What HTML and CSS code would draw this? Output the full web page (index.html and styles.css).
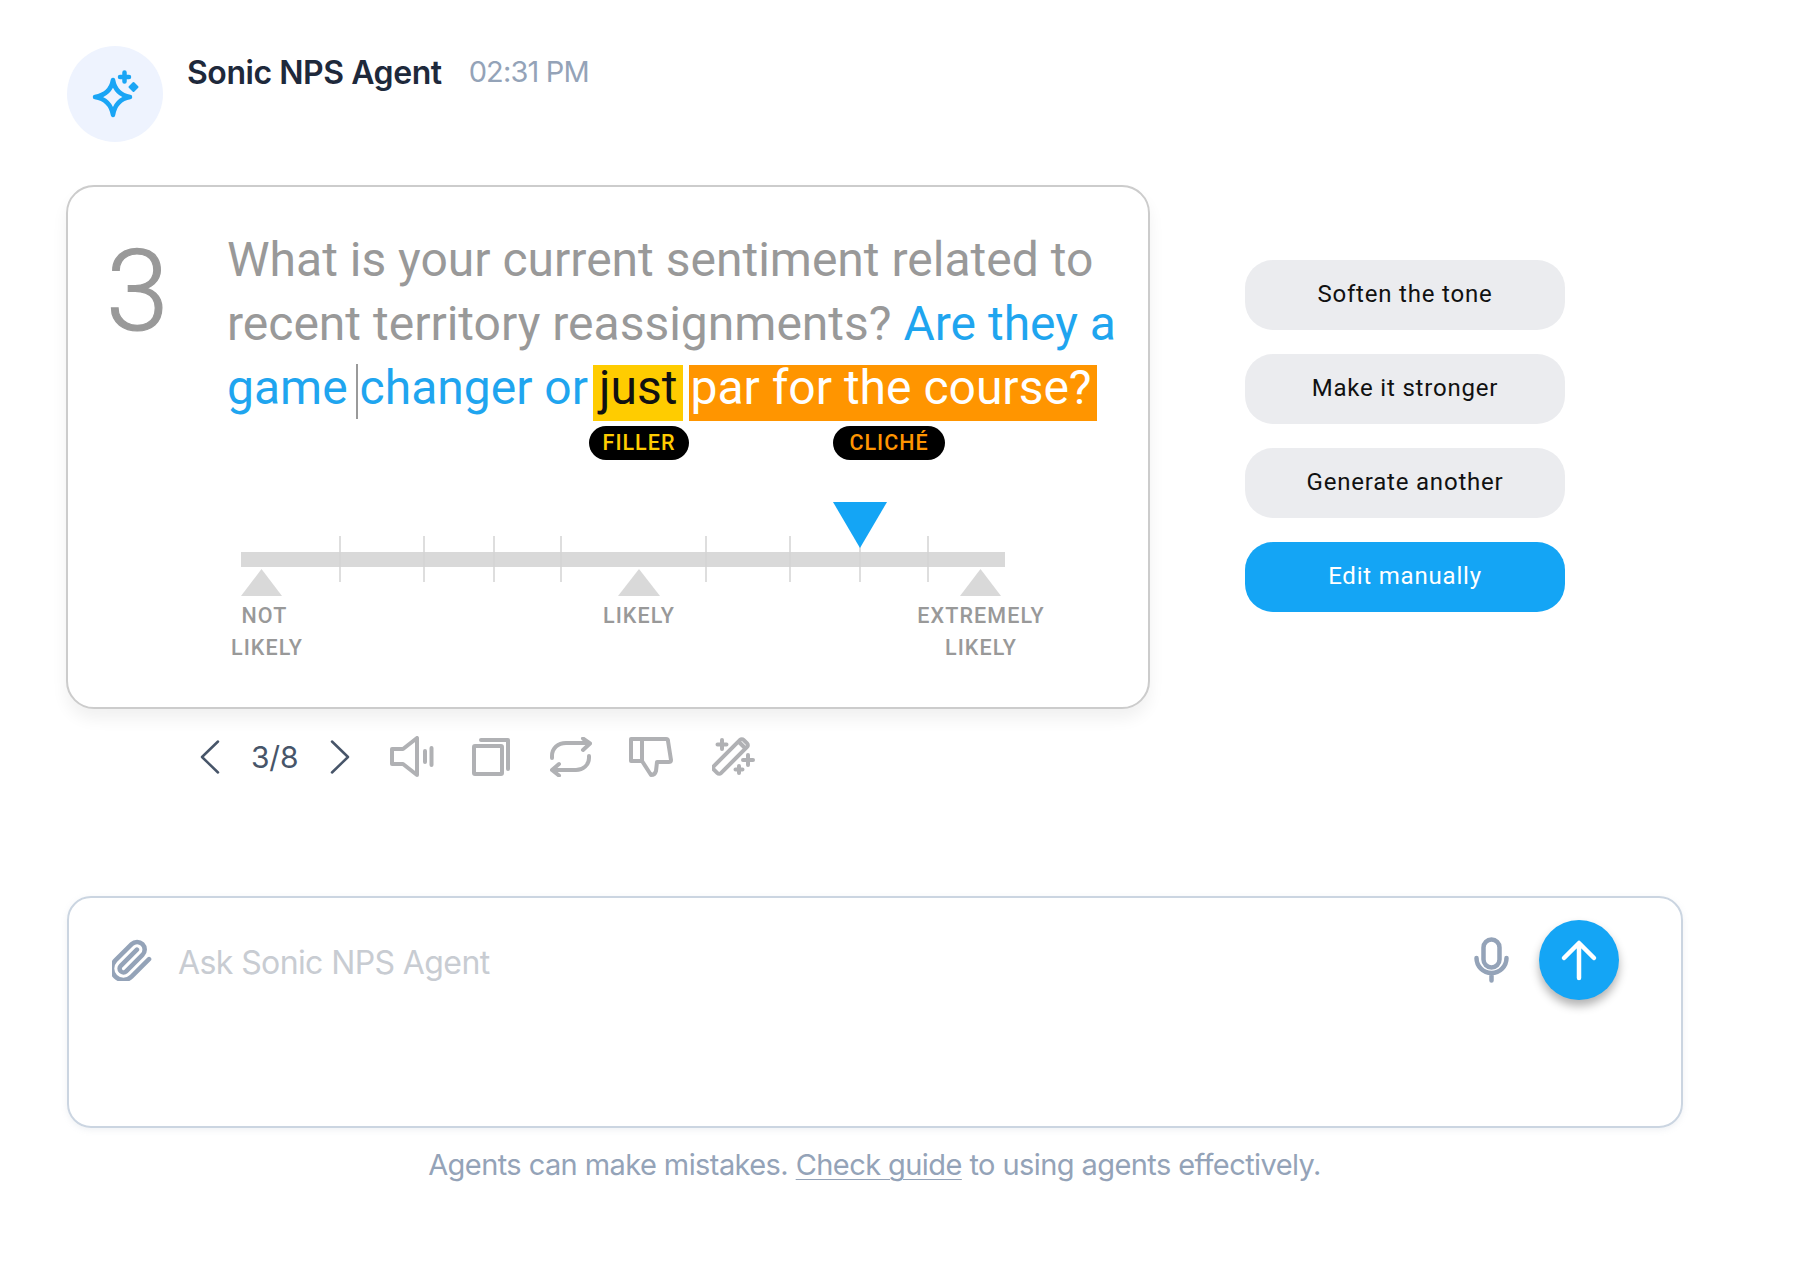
FILE: index.html
```html
<!DOCTYPE html>
<html lang="en">
<head>
  <meta charset="UTF-8" />
  <title>Sonic NPS Agent</title>
  <link rel="stylesheet" href="styles.css">
</head>
<body>
  <div class="page">
    <div class="agent-head">
      <div class="avatar">
        <svg width="96" height="96" viewBox="0 0 96 96" fill="none" stroke="#1aa5f5" stroke-width="4.500" stroke-linecap="round" stroke-linejoin="round">
          <path d="M46 34 Q48.500 48.500 63 51 Q48.500 53.500 46 69 Q43.500 53.500 28 51 Q43.500 48.500 46 34 Z"/>
          <path d="M57.500 26.500 V35.500 M53 31 H62"/>
          <path d="M66.500 37 L70.500 41 L66.500 45 L62.500 41 Z" fill="#1aa5f5" stroke-width="2"/>
        </svg>
      </div>
      <div class="agent-name">Sonic NPS Agent</div>
      <div class="agent-time">02:31 PM</div>
    </div>

    <div class="answer-row">
      <div class="answer-col">
        <div class="card">
          <div class="question">
            <div class="question-num">3</div>
            <div class="question-text">What is your current sentiment related to recent territory reassignments? <span class="blue">Are they a game<span class="caret"></span>changer or</span><span class="hl-filler">just</span><span class="hl-cliche">par for the course?</span></div>
          </div>
          <div class="tags">
            <span class="tag tag-filler">FILLER</span>
            <span class="tag tag-cliche">CLICHÉ</span>
          </div>
          <svg class="scale" width="790" height="98" viewBox="0 0 790 98">
            <g fill="#d9d9d9">
              <rect x="14" y="52" width="764" height="15"/>
              <path d="M14 96 L34.500 69 L55 96 Z"/>
              <path d="M391 96 L412 69 L433 96 Z"/>
              <path d="M733 96 L753.500 69 L774 96 Z"/>
            </g>
            <path d="M113 36V82 M197 36V82 M267 36V82 M334 36V82 M479 36V82 M563 36V82 M633 36V82 M701 36V82" stroke="#d4d4d4" stroke-width="1.500"/>
            <path d="M606 2 H660 L633 48 Z" fill="#14a5f5"/>
          </svg>
          <div class="scale-labels">
            <div class="scale-label"><span class="label-top">NOT</span><br>LIKELY</div>
            <div class="scale-label">LIKELY</div>
            <div class="scale-label">EXTREMELY<br>LIKELY</div>
          </div>
        </div>

        <div class="toolbar">
          <svg class="chev" width="20" height="34" viewBox="0 0 20 34"><path d="M18 1.500 L2 17 L18 32.500"/></svg>
          <span class="pager">3/8</span>
          <svg class="chev chev-next" width="20" height="34" viewBox="0 0 20 34"><path d="M2 1.500 L18 17 L2 32.500"/></svg>
          <svg class="tool tool-sound" width="44" height="42" viewBox="0 0 44 42"><path d="M2 13 H13 L27 2 V39 L13 28 H2 Z"/><path d="M35 15 V26 M41.500 12 V29"/></svg>
          <svg class="tool tool-copy" width="38" height="38" viewBox="0 0 38 38"><rect x="2" y="8" width="28" height="28" rx="1"/><path d="M9 2 H36 V31"/></svg>
          <svg class="tool tool-repeat" width="42" height="40" viewBox="0 0 42 40"><path d="M2 21 V19 C2 11 8 6 16 6 H39 M33 1.500 L40 6.500 L33 13"/><path d="M39 19 V21 C39 28 33 33 26 33 H3 M9 27 L2 33 L9 38.500"/></svg>
          <svg class="tool tool-thumb" width="44" height="40" viewBox="0 0 44 40"><path d="M2 2 H37 Q39 2 39 4 L42 23 Q42 25 40 25 H28 L27 34 Q26 38 22 38 L13 24 H2 Z"/><path d="M13 2 V24"/></svg>
          <svg class="tool tool-wand" width="44" height="40" viewBox="0 0 44 40">
            <rect x="-21" y="-5" width="42" height="10" rx="2.500" transform="translate(18.500 19.500) rotate(-45)"/>
            <path d="M27 5 L33 11"/>
            <path d="M10 3 V12 M5.500 7.500 H14.500 M36 18 V28 M31 23 H41 M27 29 V36 M23.500 32.500 H30.500"/>
          </svg>
        </div>
      </div>

      <div class="actions">
        <div class="action">Soften the tone</div>
        <div class="action">Make it stronger</div>
        <div class="action">Generate another</div>
        <div class="action action-primary">Edit manually</div>
      </div>
    </div>

    <div class="composer">
      <div class="composer-row">
        <svg class="clip" width="40" height="42" viewBox="2 1 21 21" fill="none" stroke="#94a3b8" stroke-width="2.400" stroke-linecap="round" stroke-linejoin="round"><path d="m21.440 11.050-9.190 9.190a6 6 0 0 1-8.490-8.490l8.570-8.570A4 4 0 1 1 18 8.840l-8.590 8.570a2 2 0 0 1-2.830-2.830l8.490-8.480"/></svg>
        <div class="composer-text">Ask Sonic NPS Agent</div>
        <svg class="mic" width="36" height="46" viewBox="0 0 36 46" fill="none" stroke="#94a3b8" stroke-width="4.500" stroke-linecap="round"><rect x="9.500" y="2.500" width="16" height="28" rx="8"/><path d="M2.500 21 a15 15 0 0 0 30 0 M17.500 36 V43.500"/></svg>
        <div class="send">
          <svg width="80" height="80" viewBox="0 0 80 80" fill="none" stroke="#fff" stroke-width="4.500" stroke-linecap="round" stroke-linejoin="round"><path d="M40 24 V58 M25 38 L40 23 L55 38"/></svg>
        </div>
      </div>
    </div>

    <div class="disclaimer">Agents can make mistakes. <a href="#" class="guide-link">Check guide</a> to using agents effectively.</div>
  </div>
</body>
</html>
```

FILE: styles.css
```css
body {
  margin: 0;
  background: #fff;
  font-family: 'Inter', 'Liberation Sans', sans-serif;
}

.page {
  width: 1617px;
  padding: 46px 0 0 66px;
}

/* header */
.agent-head {
  display: flex;
  align-items: flex-start;
  padding-left: 1px;
}

.avatar {
  width: 96px;
  height: 96px;
  border-radius: 50%;
  background: #eef3fe;
  flex-shrink: 0;
}

.agent-name {
  margin: 7px 0 0 24px;
  font-size: 32px;
  line-height: 40px;
  font-weight: 600;
  letter-spacing: -0.45px;
  color: #1e293b;
}

.agent-time {
  margin: 6px 0 0 27px;
  font-size: 29px;
  line-height: 40px;
  letter-spacing: -0.85px;
  color: #94a3b8;
}

/* question card */
.answer-row {
  display: flex;
  margin-top: 43px;
}

.answer-col {
  width: 1084px;
}

.card {
  box-sizing: border-box;
  height: 524px;
  border: 2px solid #cccccc;
  border-radius: 28px;
  background: #fff;
  box-shadow: 0 10px 16px rgba(0, 0, 0, 0.06);
  padding-top: 41px;
  font-family: 'Roboto', 'Liberation Sans', sans-serif;
}

.question {
  display: flex;
}

.question-num {
  width: 159px;
  padding: 8px 0 0 38px;
  box-sizing: border-box;
  font-size: 113px;
  font-weight: 300;
  -webkit-text-stroke: 1.2px #999;
  line-height: 112px;
  color: #999;
  flex-shrink: 0;
}

.question-text {
  width: 900px;
  font-size: 48px;
  line-height: 64px;
  color: #999;
}

.blue {
  color: #1fa5ef;
}

.caret {
  display: inline-block;
  width: 2px;
  height: 55px;
  margin: 0 2px 0 8px;
  background: #9a9a9a;
  vertical-align: -15px;
}

/* the colour band sits a little lower than the text box */
.hl-filler {
  margin-left: 5px;
  padding: 0 6px 5px;
  background: linear-gradient(#ffcc00, #ffcc00) 0 100% / 100% 56px no-repeat;
  color: #111;
}

.hl-cliche {
  margin-left: 6px;
  padding: 0 5px 5px 1px;
  background: linear-gradient(#ff9500, #ff9500) 0 100% / 100% 56px no-repeat;
  color: #fff;
}

.tags {
  display: flex;
  gap: 144px;
  margin: 6px 0 0 521px;
}

.tag {
  height: 34px;
  line-height: 34px;
  border-radius: 17px;
  background: #000;
  font-size: 21.5px;
  font-weight: 500;
  letter-spacing: 1px;
  text-align: center;
}

.tag-filler {
  width: 100px;
  color: #ffcc00;
}

.tag-cliche {
  width: 112px;
  color: #ff9500;
}

.scale {
  display: block;
  margin: 40px 0 0 159px;
}

.scale-labels {
  display: flex;
  margin: 2px 0 0 134px;
}

.scale-label {
  width: 130px;
  font-size: 21.5px;
  font-weight: 500;
  line-height: 32px;
  letter-spacing: 1.1px;
  text-align: center;
  color: #999;
}

.scale-label + .scale-label {
  margin-left: 242px;
}

.scale-label + .scale-label + .scale-label {
  margin-left: 212px;
}

.label-top {
  margin-right: 5px;
}

/* toolbar under the card */
.toolbar {
  display: flex;
  align-items: center;
  height: 40px;
  margin: 28px 0 0 134px;
}

.chev {
  fill: none;
  stroke: #475569;
  stroke-width: 2.500;
  stroke-linecap: round;
  stroke-linejoin: round;
}

.chev-next {
  margin-left: 32px;
}

.pager {
  margin-left: 31px;
  font-size: 30px;
  letter-spacing: -0.2px;
  color: #475569;
}

.tool {
  fill: none;
  stroke: #b0b1b4;
  stroke-width: 4;
  stroke-linecap: round;
  stroke-linejoin: round;
}

.tool-sound {
  margin-left: 40px;
}

.tool-copy {
  margin-left: 38px;
}

.tool-repeat {
  margin-left: 40px;
}

.tool-thumb {
  margin-left: 37px;
}

.tool-wand {
  margin-left: 39px;
}

/* suggested actions */
.actions {
  display: flex;
  flex-direction: column;
  gap: 24px;
  width: 320px;
  margin: 75px 0 0 95px;
}

.action {
  height: 70px;
  line-height: 68px;
  border-radius: 28px;
  background: #ebecef;
  text-align: center;
  font-family: 'Roboto', 'Liberation Sans', sans-serif;
  font-size: 24px;
  letter-spacing: 0.8px;
  color: #111;
}

.action-primary {
  background: #14a5f5;
  color: #fff;
}

/* composer */
.composer {
  box-sizing: border-box;
  width: 1616px;
  height: 232px;
  margin: 119px 0 0 1px;
  padding: 22px 62px 0 43px;
  border: 2px solid #cbd5e1;
  border-radius: 24px;
  box-shadow: 0 2px 6px rgba(148, 163, 184, 0.15);
}

.composer-row {
  display: flex;
  align-items: center;
  height: 80px;
}

.composer-text {
  flex: 1;
  margin-left: 26px;
  padding-top: 4px;
  font-size: 32px;
  letter-spacing: -0.6px;
  color: #c8ccd2;
}

.mic {
  margin-left: 1px;
}

.send {
  width: 80px;
  height: 80px;
  margin-left: 29px;
  border-radius: 50%;
  background: #14a5f5;
  box-shadow: 0 6px 10px rgba(0, 0, 0, 0.3);
}

.send svg {
  display: block;
}

.disclaimer {
  width: 1617px;
  margin-top: 19px;
  text-align: center;
  font-size: 29px;
  line-height: 36px;
  letter-spacing: -0.58px;
  color: #94a3b8;
}

.guide-link {
  color: #94a3b8;
  text-underline-offset: 4px;
  text-decoration-thickness: 1px;
}
```
